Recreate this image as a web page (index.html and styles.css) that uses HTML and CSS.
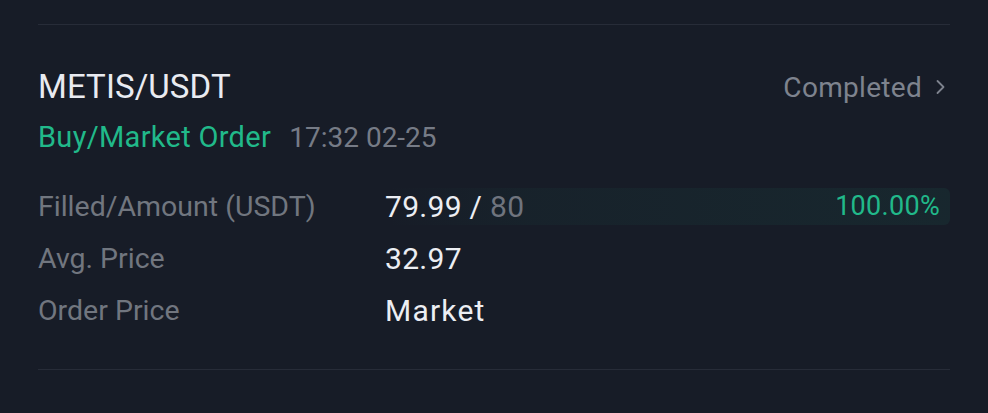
FILE: index.html
```html
<!DOCTYPE html>
<html lang="en">
<head>
    <meta charset="UTF-8">
    <meta name="viewport" content="width=device-width, initial-scale=1.0">
    <title>Order</title>
    <link rel="stylesheet" href="styles.css">
</head>
<body>
    <div class="order-list">
        <div class="order">
            <div class="order-head">
                <h2 class="pair">METIS/USDT</h2>
                <a class="status" href="#">Completed
                    <svg width="12" height="18" viewBox="0 0 12 18"><path d="M2.5 3 L8.5 9 L2.5 15" fill="none" stroke="currentColor" stroke-width="1.8" stroke-linecap="round" stroke-linejoin="round"/></svg>
                </a>
            </div>
            <div class="order-sub">
                <span class="side">Buy/Market Order</span>
                <span class="time">17:32 02-25</span>
            </div>

            <!-- 成交明细 -->
            <div class="order-info">
                <div class="row">
                    <span class="label">Filled/Amount (USDT)</span>
                    <div class="value progress">
                        <span>79.99 / <em>80</em></span>
                        <span class="percent">100.00%</span>
                    </div>
                </div>
                <div class="row">
                    <span class="label">Avg. Price</span>
                    <div class="value">32.97</div>
                </div>
                <div class="row">
                    <span class="label">Order Price</span>
                    <div class="value market">Market</div>
                </div>
            </div>
        </div>
    </div>
</body>
</html>
```

FILE: styles.css
```css
* {
    box-sizing: border-box;
}
body {
    margin: 0;
    background-color: #171c27;
    font-family: Roboto, "Noto Sans", sans-serif;
}
.order-list {
    padding: 24px 38px 0;
}
.order {
    border-top: 1px solid #272c38;
    border-bottom: 1px solid #272c38;
    padding: 42px 0 33px;
}

/* 标题行 */
.order-head {
    display: flex;
    justify-content: space-between;
    align-items: center;
    height: 40px;
}
.pair {
    margin: 0;
    font-size: 33px;
    font-weight: 400;
    line-height: 40px;
    color: #e9ebf1;
    letter-spacing: 0.1px;
}
.status {
    display: flex;
    align-items: center;
    gap: 13px;
    margin-right: 3px;
    color: #7e838e;
    font-size: 28px;
    text-decoration: none;
    letter-spacing: 0.3px;
}
.order-sub {
    margin-top: 12px;
    line-height: 36px;
    font-size: 29px;
}
.side {
    color: #21b98a;
    letter-spacing: 0.3px;
    margin-right: 11px;
}
.time {
    color: #767b86;
    font-size: 28px;
}

/* 明细 */
.order-info {
    margin-top: 24px;
}
.row {
    display: grid;
    grid-template-columns: 347px 1fr;
    align-items: center;
    height: 52px;
    font-size: 28.5px;
}
.label {
    color: #71767f;
}
.value {
    color: #eceef3;
    font-size: 30px;
    letter-spacing: 0.3px;
}
.value em {
    font-style: normal;
    color: #6f747e;
}
.market {
    letter-spacing: 1.2px;
}
.progress {
    display: flex;
    justify-content: space-between;
    align-items: center;
    height: 37px;
    padding-right: 10px;
    border-radius: 6px;
    background: linear-gradient(90deg, rgba(33, 185, 138, 0) 0%, rgba(33, 185, 138, 0.04) 25%, rgba(33, 185, 138, 0.07) 100%);
}
.percent {
    color: #21b98a;
    font-size: 27px;
}
```
